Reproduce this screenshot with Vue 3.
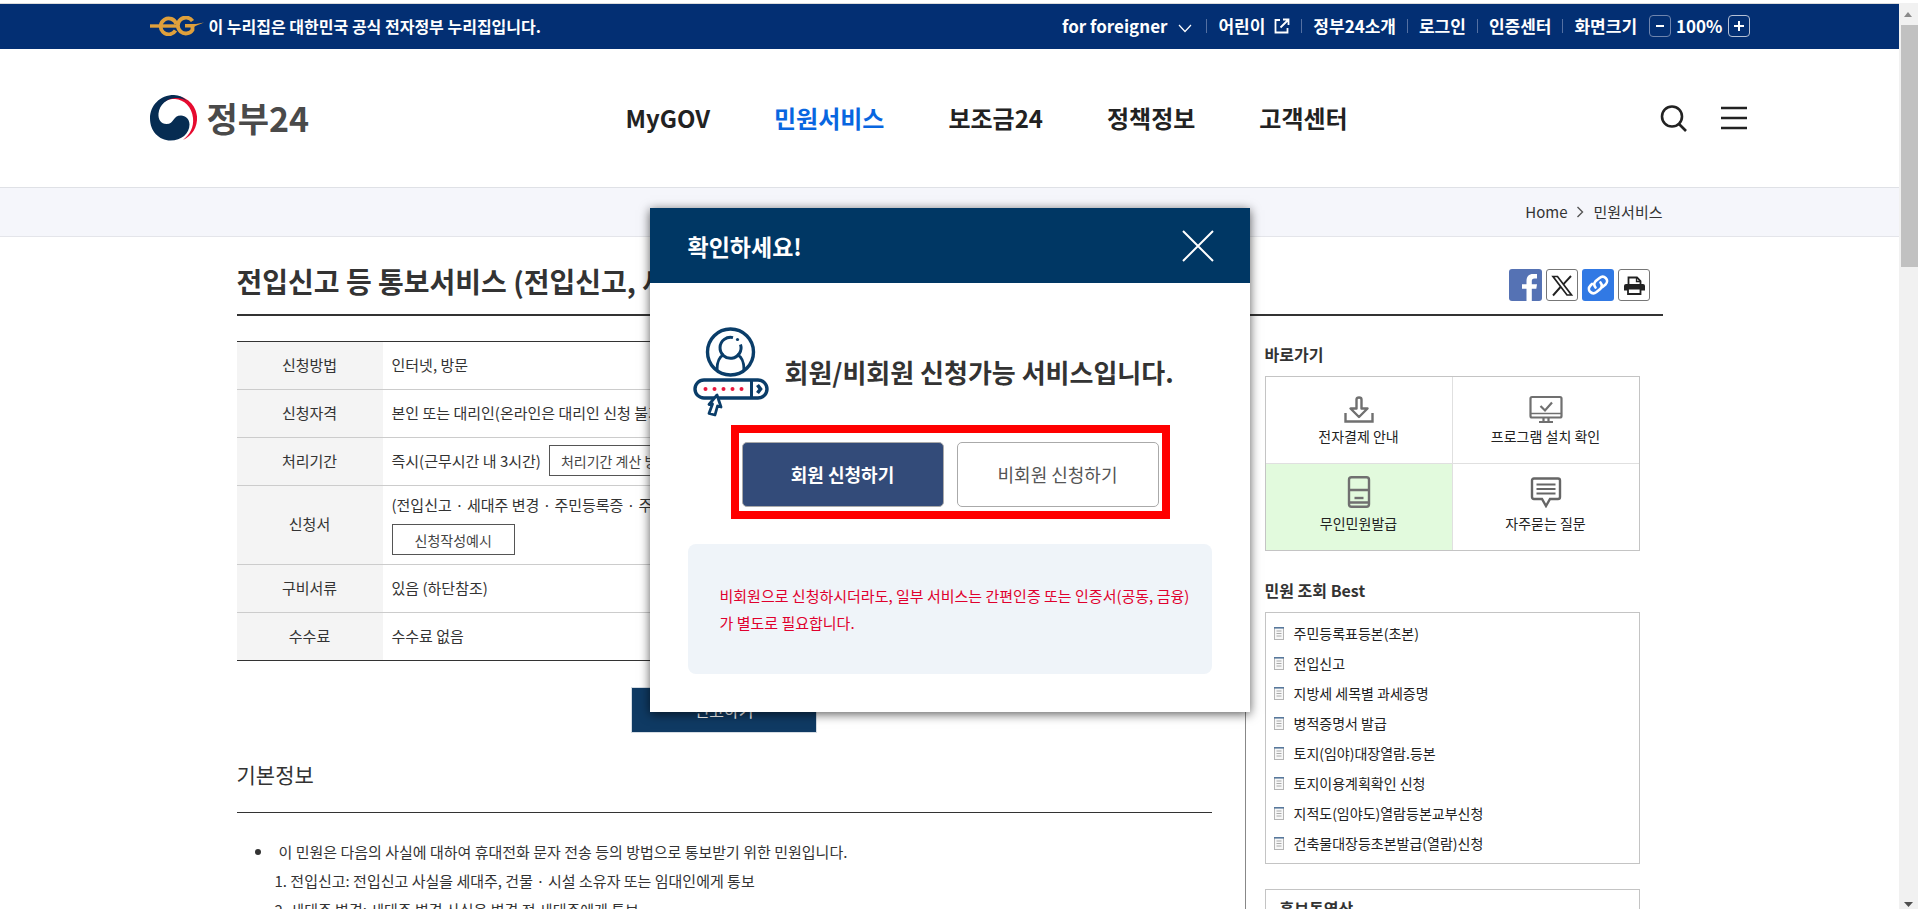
<script setup>
const menus = [
  { label: 'MyGOV' },
  { label: '민원서비스', active: true },
  { label: '보조금24' },
  { label: '정책정보' },
  { label: '고객센터' },
]

const bestServices = [
  '주민등록표등본(초본)',
  '전입신고',
  '지방세 세목별 과세증명',
  '병적증명서 발급',
  '토지(임야)대장열람.등본',
  '토지이용계획확인 신청',
  '지적도(임야도)열람등본교부신청',
  '건축물대장등초본발급(열람)신청',
]
</script>

<template>
  <div class="window">
    <div class="page">
      <div class="topbar">
        <div class="wide topbar-inner">
          <div class="official">
            <svg class="eg" viewBox="0 0 54 20" width="54" height="20" fill="none" stroke="#dfa03c" aria-hidden="true">
              <path d="M0 10H27" stroke-width="3.400" />
              <path d="M26.300 8A8 8 0 1 0 25.500 14.500" stroke-width="3.800" />
              <path d="M42.500 5A8 8 0 1 0 42.500 14V9.600" stroke-width="3.800" />
              <path d="M35 8H46L54 6.500 46 9.800 43 11.500H35Z" fill="#dfa03c" stroke="none" />
            </svg>
            <span>이 누리집은 대한민국 공식 전자정부 누리집입니다.</span>
          </div>
          <ul class="utils">
            <li>
              <a href="#">for foreigner
                <svg class="chev" viewBox="0 0 14 9" width="14" height="9" fill="none" stroke="#fff" stroke-width="1.2"><path d="M1 1l6 6.5L13 1" /></svg>
              </a>
            </li>
            <li>
              <a href="#">어린이
                <svg class="ext" viewBox="0 0 16 16" width="16" height="16" fill="none" stroke="#fff" stroke-width="1.8"><path d="M6 2H1.5V14.5H13.5V10M9 1.5H14.5V7M14 2L6.5 9.5" /></svg>
              </a>
            </li>
            <li><a href="#">정부24소개</a></li>
            <li><a href="#">로그인</a></li>
            <li><a href="#">인증센터</a></li>
            <li class="zoomer">
              <span>화면크기</span>
              <button type="button" class="step dim" aria-label="축소"><svg viewBox="0 0 12 12" width="12" height="12" stroke="#fff" stroke-width="2"><path d="M2 6H10" /></svg></button>
              <span class="pct">100%</span>
              <button type="button" class="step" aria-label="확대"><svg viewBox="0 0 12 12" width="12" height="12" stroke="#fff" stroke-width="2"><path d="M1 6H11M6 1V11" /></svg></button>
            </li>
          </ul>
        </div>
      </div>

      <header class="header">
        <div class="wide header-inner">
          <a class="logo" href="#">
            <svg viewBox="0 0 48 46" width="48" height="46" aria-hidden="true">
              <path d="M24 1C36 .5 46 9.500 47 21.500C47.800 32 42 41 33 45C40 39.500 44 32 43 23C42 12 34 4.500 25 4C18.500 3.800 13 6.500 10 11C12.500 4.500 18 1.200 24 1Z" fill="#e60b2f" />
              <path d="M24 0C10 0 0 10.500 0 23.500C0 36 9 45.500 20.500 45.500C31.500 45.500 39.500 38.500 39.500 29.500C39.500 24 35.500 20.500 31 20.500C22.500 20.500 24.500 29 16.500 29C11 29 8 24.500 8.500 18.500C9.500 9.500 17 3.500 25.500 3C30 2.800 34 4 37 6C33.500 2 29 0 24 0Z" fill="#062c52" />
            </svg>
            <span>정부24</span>
          </a>
          <nav>
            <a v-for="m in menus" :key="m.label" href="#" :class="{ active: m.active }">{{ m.label }}</a>
          </nav>
          <div class="tools">
            <button type="button" aria-label="검색"><svg viewBox="0 0 28 28" width="28" height="28" fill="none" stroke="#222" stroke-width="2.600"><circle cx="12" cy="12.500" r="10" /><path d="M19 20l7 7" /></svg></button>
            <button type="button" aria-label="전체메뉴"><svg viewBox="0 0 28 28" width="28" height="28" fill="none" stroke="#222" stroke-width="2.600"><path d="M1 4H27M1 14H27M1 24H27" /></svg></button>
          </div>
        </div>
      </header>

      <div class="crumbs">
        <div class="container crumbs-inner">
          <a href="#">Home</a>
          <svg viewBox="0 0 8 12" width="8" height="12" fill="none" stroke="#555" stroke-width="1.400"><path d="M1.500 1l5 5-5 5" /></svg>
          <a href="#">민원서비스</a>
        </div>
      </div>

      <main class="container">
        <div class="titlebar">
          <h1>전입신고 등 통보서비스 (전입신고, 세대주 변경, 주민등록증)</h1>
          <div class="share">
            <button type="button" class="fb" aria-label="페이스북"><svg viewBox="0 0 32 32" width="32" height="32"><path d="M17.500 32V19.800H13V15.200H17.500V12C17.500 7.500 20 5 24 5H28V9.600H25.500C23.500 9.600 22.800 10.500 22.800 12.300V15.200H28L27.300 19.800H22.800V32Z" fill="#fff" /></svg></button>
            <button type="button" class="boxed" aria-label="X"><svg viewBox="0 0 30 30" width="30" height="30" fill="none" stroke="#222"><path d="M6 6.500H10.500L24.500 25H20Z" stroke-width="1.700" /><path d="M24 6L16.500 14.200M13.500 17L6 25.500" stroke-width="1.900" /></svg></button>
            <button type="button" class="link" aria-label="링크 복사"><svg viewBox="0 0 32 32" width="32" height="32" fill="none" stroke="#fff" stroke-width="2.600" stroke-linecap="round"><path d="M13.500 18.500C11.500 16 12 14 13.500 12.300L17.500 9C22 5.500 28 11 23.500 15.500L20.500 18" /><path d="M18.500 13.500C20.500 16 20 18 18.500 19.700L14.500 23C10 26.500 4 21 8.500 16.500L10 15" /></svg></button>
            <button type="button" class="boxed" aria-label="인쇄"><svg viewBox="0 0 30 30" width="30" height="30"><path d="M9.500 14V7.500H18L21.500 11V14" fill="#fff" stroke="#222" stroke-width="1.800" /><path d="M17.500 7v4.500H22" fill="none" stroke="#222" stroke-width="1.300" /><path d="M7 14H24Q26 14 26 16V20.500H5V16Q5 14 7 14Z" fill="#222" /><path d="M9 18.500H21.500V24H9Z" fill="#fff" stroke="#222" stroke-width="1.800" /></svg></button>
          </div>
        </div>

        <div class="columns">
          <div class="content">
            <table class="info">
              <tbody>
                <tr><th scope="row">신청방법</th><td>인터넷, 방문</td></tr>
                <tr><th scope="row">신청자격</th><td>본인 또는 대리인(온라인은 대리인 신청 불가)</td></tr>
                <tr><th scope="row">처리기간</th><td><div class="inline"><span>즉시(근무시간 내 3시간)</span><button type="button" class="outline">처리기간 계산 방법</button></div></td></tr>
                <tr class="tall"><th scope="row">신청서</th><td><div class="stack"><span>(전입신고 · 세대주 변경 · 주민등록증 · 주민등록표 등)</span><button type="button" class="outline sample">신청작성예시</button></div></td></tr>
                <tr><th scope="row">구비서류</th><td>있음 (하단참조)</td></tr>
                <tr><th scope="row">수수료</th><td>수수료 없음</td></tr>
              </tbody>
            </table>
            <button type="button" class="report">신고하기</button>
            <h2>기본정보</h2>
            <ul class="basic">
              <li>
                <p>이 민원은 다음의 사실에 대하여 휴대전화 문자 전송 등의 방법으로 통보받기 위한 민원입니다.</p>
                <ol>
                  <li>1. 전입신고: 전입신고 사실을 세대주, 건물 · 시설 소유자 또는 임대인에게 통보</li>
                  <li>2. 세대주 변경: 세대주 변경 사실을 변경 전 세대주에게 통보</li>
                </ol>
              </li>
            </ul>
          </div>

          <aside class="side">
            <h3>바로가기</h3>
            <div class="quick">
              <a href="#">
                <svg viewBox="0 0 32 32" width="32" height="32" fill="none" stroke="#707070" stroke-width="2.400"><path d="M13.500 5.500Q13.500 3.500 16 3.500T18.500 5.500V14.500H24.500L16 23 7.500 14.500H13.500Z" stroke-linejoin="round" /><path d="M2.500 19V27.500H29.500V19" /></svg>
                <span>전자결제 안내</span>
              </a>
              <a href="#">
                <svg viewBox="0 0 34 32" width="34" height="32" fill="none" stroke="#707070" stroke-width="2.200"><rect x="1.500" y="3" width="31" height="20.500" rx="1.500" /><path d="M2 19.500H32" stroke-width="1.500" /><path d="M11.500 12l4.500 4.500L23 8.500" /><path d="M14.500 24V27.500M19.500 24V27.500M10 28H24" /></svg>
                <span>프로그램 설치 확인</span>
              </a>
              <a href="#" class="green">
                <svg viewBox="0 0 32 32" width="32" height="32" fill="none" stroke="#707070" stroke-width="2.400"><rect x="6" y="1.200" width="20" height="29.600" rx="2.500" /><path d="M6 14H26M6 26.500H26" /><path d="M11.500 22H20.500" /></svg>
                <span>무인민원발급</span>
              </a>
              <a href="#">
                <svg viewBox="0 0 32 32" width="32" height="32" fill="none" stroke="#666" stroke-width="2.400"><path d="M4 2.500H28Q30 2.500 30 4.500V21Q30 23 28 23H20L16 30 12 23H4Q2 23 2 21V4.500Q2 2.500 4 2.500Z" /><path d="M6.500 8.500H25.500M6.500 13H25.500M6.500 17.500H25.500" stroke-width="2" /></svg>
                <span>자주묻는 질문</span>
              </a>
            </div>
            <h3>민원 조회 Best</h3>
            <ul class="best">
              <li v-for="s in bestServices" :key="s">
                <svg viewBox="0 0 10 13" width="10" height="13"><rect x=".5" y=".5" width="9" height="12" fill="#f7f7f7" stroke="#b5b5b5" /><path d="M0 .8H10" stroke="#57789c" stroke-width="1.600" /><path d="M2.500 4H7.500M2.500 6.500H7.500M2.500 9H7.500" stroke="#aaa" /></svg>
                <a href="#">{{ s }}</a>
              </li>
            </ul>
            <section class="video">
              <h3>홍보동영상</h3>
            </section>
          </aside>
        </div>
      </main>

      <div class="dialog" role="dialog" aria-labelledby="dialog-title">
        <div class="dialog-head">
          <strong id="dialog-title">확인하세요!</strong>
          <button type="button" aria-label="닫기"><svg viewBox="0 0 32 32" width="32" height="32" stroke="#fff" stroke-width="2"><path d="M1 1L31 31M31 1L1 31" /></svg></button>
        </div>
        <div class="dialog-body">
          <div class="intro">
            <svg viewBox="0 0 76 90" width="76" height="90" fill="none" stroke="#0a3d69" stroke-width="3.400" aria-hidden="true">
              <circle cx="37.500" cy="25" r="23" />
              <path d="M40 10.600A10.500 10.500 0 1 0 47.500 17.500" stroke-width="3" />
              <circle cx="44.500" cy="12.500" r="1.600" fill="#0a3d69" stroke="none" />
              <path d="M24 43C24 34 26 30 31 27.500M51 43C51 34 49 30 44 27.500" stroke-width="3" />
              <rect x="2" y="53" width="72" height="18" rx="9" />
              <path d="M58.500 53V71" stroke-width="3" />
              <path d="M64.500 58L67.500 62 64.500 66" stroke-width="3.600" />
              <g fill="#e8173c" stroke="none"><circle cx="12.500" cy="62" r="2" /><circle cx="21.500" cy="62" r="2" /><circle cx="30.500" cy="62" r="2" /><circle cx="39.500" cy="62" r="2" /><circle cx="48.500" cy="62" r="2" /></g>
              <path d="M24 68L16 77.500 19.500 77 16 86.500 22 88 24.500 79 28 80Z" fill="#fff" stroke-width="2.800" stroke-linejoin="round" />
            </svg>
            <p>회원/비회원 신청가능 서비스입니다.</p>
          </div>
          <div class="choices">
            <button type="button" class="member">회원 신청하기</button>
            <button type="button" class="guest">비회원 신청하기</button>
          </div>
          <p class="note">비회원으로 신청하시더라도, 일부 서비스는 간편인증 또는 인증서(공동, 금융)<br>가 별도로 필요합니다.</p>
        </div>
      </div>
    </div>

    <div class="scroll" aria-hidden="true">
      <svg viewBox="0 0 18 22" width="18" height="22"><path d="M5 14L9 9l4 5Z" fill="#8a8a8a" /></svg>
      <div class="thumb"></div>
      <svg class="down" viewBox="0 0 18 22" width="18" height="22"><path d="M5 15L9.500 20l4.500-5Z" fill="#505050" /></svg>
    </div>
  </div>
</template>

<style>
body {
  margin: 0;
  overflow: hidden;
}
</style>

<style scoped>
.window {
  display: flex;
  height: 100vh;
  overflow: hidden;
  box-sizing: border-box;
  padding-top: 3px;
  background: #fff;
  font-family: "Noto Sans CJK KR", "Noto Sans", sans-serif;
  font-size: 15px;
  line-height: 24px;
  color: #333;
  white-space: nowrap;
}
.window *,
.window *::before {
  box-sizing: border-box;
}
a {
  color: inherit;
  text-decoration: none;
}
button {
  font: inherit;
  color: inherit;
  padding: 0;
  margin: 0;
  border: 0;
  background: none;
}
ul,
ol,
p,
h1,
h2,
h3 {
  margin: 0;
  padding: 0;
  list-style: none;
}
svg {
  display: block;
  flex: none;
}
.page {
  position: relative;
  flex: 1;
  min-width: 0;
  overflow: hidden;
  border-top: 1px solid #dcdcdc;
}
.wide {
  width: 100%;
  max-width: 1600px;
  margin: 0 auto;
}
.container {
  width: 100%;
  max-width: 1426px;
  margin: 0 auto;
}

/* top bar */
.topbar {
  background: #032f73;
  color: #fff;
}
.topbar-inner {
  display: flex;
  justify-content: space-between;
  align-items: center;
  height: 45px;
  padding-bottom: 1px;
}
.official {
  display: flex;
  align-items: center;
  gap: 5px;
  font-size: 16px;
  font-weight: 700;
}
.utils {
  display: flex;
  align-items: center;
  font-size: 17px;
  font-weight: 700;
}
.utils li {
  display: flex;
  align-items: center;
}
.utils li + li::before {
  content: "";
  width: 1px;
  height: 14px;
  margin: 0 11px;
  background: #5470a2;
}
.utils a {
  display: flex;
  align-items: center;
  gap: 9px;
}
.chev {
  margin: 4px 3px 0 2px;
}
.step {
  display: flex;
  align-items: center;
  justify-content: center;
  width: 22px;
  height: 22px;
  border: 1px solid #b5c0d5;
  border-radius: 4px;
}
.dim {
  margin-left: 12px;
  border-color: #6f85ae;
}
.pct {
  margin: 0 5px;
}

/* header */
.header {
  border-bottom: 1px solid #dfe1e6;
}
.header-inner {
  display: flex;
  align-items: center;
  height: 138px;
  padding-bottom: 1px;
}
.logo {
  display: flex;
  align-items: center;
  gap: 9px;
  width: 476px;
  font-size: 34px;
  line-height: 46px;
  font-weight: 700;
  color: #4a4a4a;
}
nav {
  display: flex;
  gap: 64px;
  font-size: 24px;
  line-height: 36px;
  font-weight: 700;
  color: #222;
}
.active {
  color: #0866e0;
}
.tools {
  display: flex;
  flex: 1;
  justify-content: flex-end;
  gap: 32px;
  padding-right: 2px;
}

/* breadcrumb */
.crumbs {
  background: #f5f6fb;
  border-bottom: 1px solid #e4e5ea;
}
.crumbs-inner {
  display: flex;
  justify-content: flex-end;
  align-items: center;
  gap: 9px;
  height: 48px;
}

/* title */
.titlebar {
  display: flex;
  justify-content: space-between;
  height: 79px;
  padding: 23px 13px 0 0;
  border-bottom: 2px solid #333;
}
h1 {
  font-size: 28px;
  line-height: 42px;
  font-weight: 700;
}
.share {
  display: flex;
  gap: 4px;
  padding-top: 9px;
}
.share button {
  display: flex;
  width: 32px;
  height: 32px;
  border-radius: 3px;
}
.share .fb {
  width: 33px;
  background: #5572b4;
}
.link {
  background: #3179e4;
}
.share .boxed {
  border: 1px solid #777;
}

/* columns */
.columns {
  display: grid;
  grid-template-columns: minmax(0, 1fr) 375px;
  padding: 25px 23px 0 0;
}
.content {
  padding-right: 33px;
  border-right: 1px solid #888;
  margin-right: 19px;
}
.info {
  width: 100%;
  border-collapse: collapse;
  border-top: 1px solid #333;
  border-bottom: 1px solid #333;
}
.info tr + tr {
  border-top: 1px solid #ccc;
}
.info th {
  width: 146px;
  height: 48px;
  padding: 0 0 2px;
  background: #f4f4f4;
  font-weight: 400;
  text-align: center;
}
.info td {
  padding: 0 9px 2px;
}
.info .tall th {
  height: 79px;
}
.inline {
  display: flex;
  align-items: center;
  gap: 8px;
}
.stack {
  display: flex;
  flex-direction: column;
  align-items: flex-start;
  gap: 7px;
}
.outline {
  height: 31px;
  padding: 0 11px;
  border: 1px solid #555;
  background: #fff;
  font-size: 14px;
  color: #444;
}
.sample {
  padding: 0 22px;
}
.report {
  display: block;
  width: 186px;
  height: 46px;
  margin: 26px auto 0;
  border: 1px solid #d5dce3;
  background: #0f3a63;
  color: #fff;
  font-size: 16px;
}
h2 {
  margin-top: 25px;
  padding-bottom: 22px;
  border-bottom: 1px solid #333;
  font-size: 21px;
  line-height: 32px;
  font-weight: 400;
}
.basic {
  padding: 24px 0 0 38px;
  line-height: 29px;
}
.basic p {
  display: flex;
  align-items: center;
  gap: 18px;
  margin-left: -20px;
}
.basic p::before {
  content: "";
  width: 6px;
  height: 6px;
  border-radius: 50%;
  background: #333;
}

/* side */
.side {
  padding-top: 1px;
}
h3 {
  font-size: 16px;
  line-height: 24px;
  font-weight: 700;
}
.quick {
  display: grid;
  grid-template-columns: 1fr 1fr;
  gap: 1px;
  margin: 10px 0 27px;
  border: 1px solid #c4c4c4;
  background: #e0e0e0;
}
.quick a {
  display: flex;
  flex-direction: column;
  align-items: center;
  height: 86px;
  padding-top: 17px;
  background: #fff;
  font-size: 14px;
  line-height: 20px;
  color: #222;
}
.quick a:nth-child(n + 3) {
  padding-top: 12px;
  gap: 5px;
}
.quick a.green {
  background: #e2fadd;
}
.best {
  margin: 10px 0 25px;
  padding: 5px 8px;
  border: 1px solid #c4c4c4;
  font-size: 14px;
  color: #222;
}
.best li {
  display: flex;
  align-items: center;
  gap: 10px;
  height: 30px;
}
.video {
  padding: 6px 14px 30px;
  border: 1px solid #c4c4c4;
}

/* dialog */
.dialog {
  position: absolute;
  top: 204px;
  left: 0;
  right: 0;
  width: 600px;
  margin: 0 auto;
  background: #fff;
  box-shadow: 0 2px 10px rgba(0, 0, 0, 0.65);
}
.dialog-head {
  display: flex;
  align-items: center;
  justify-content: space-between;
  height: 75px;
  padding: 0 36px 0 38px;
  background: #003764;
  color: #fff;
  font-size: 23px;
}
.dialog-body {
  padding: 44px 38px 38px;
}
.intro {
  display: flex;
  align-items: center;
  gap: 16px;
  padding-left: 5px;
}
.intro p {
  font-size: 26px;
  line-height: 40px;
  font-weight: 700;
}
.choices {
  display: flex;
  gap: 13px;
  width: 439px;
  margin: 8px auto 25px 43px;
  padding: 9px 3px 4px;
  border: 8px solid #f00;
}
.choices button {
  flex: 1;
  height: 65px;
  padding-bottom: 2px;
  border: 1px solid #aaa;
  border-radius: 5px;
  font-size: 18px;
}
.choices .member {
  background: #334b79;
  color: #fff;
  font-weight: 700;
}
.guest {
  color: #555;
}
.note {
  height: 130px;
  padding: 38px 16px 0 32px;
  border-radius: 8px;
  background: #eff4f9;
  color: #e0002d;
  line-height: 27px;
}

/* page scroll bar */
.scroll {
  display: flex;
  flex-direction: column;
  flex: none;
  width: 19px;
  background: #f1f1f1;
}
.thumb {
  height: 242px;
  margin-left: 2px;
  background: #c1c1c1;
}
.down {
  margin-top: auto;
}
</style>
